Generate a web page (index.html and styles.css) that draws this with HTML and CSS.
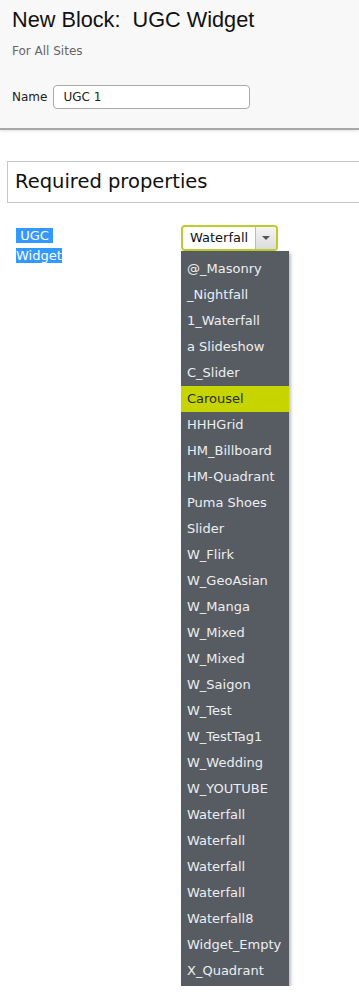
FILE: index.html
```html
<!DOCTYPE html>
<html lang="en">
<head>
    <meta charset="UTF-8">
    <meta name="viewport" content="width=device-width, initial-scale=1.0">
    <title>New Block</title>
    <link rel="stylesheet" href="styles.css">
</head>
<body>
    <div class="header">
        <h1>New Block:&nbsp; UGC Widget</h1>
        <div class="subtitle">For All Sites</div>
        <div class="name-row">
            <label for="block-name">Name</label>
            <input type="text" id="block-name" value="UGC 1">
        </div>
    </div>

    <div class="section">
        <div class="section-title">Required properties</div>
        <div class="prop-row">
            <div class="prop-label"><span class="sel">&nbsp;UGC&nbsp;</span><br><span class="sel">Widget</span></div>
            <div class="combo">
                <div class="combo-box">
                    <span class="combo-text">Waterfall</span>
                    <span class="combo-arrow"></span>
                </div>
                <ul class="combo-list">
                    <li>@_Masonry</li>
                    <li>_Nightfall</li>
                    <li>1_Waterfall</li>
                    <li>a Slideshow</li>
                    <li>C_Slider</li>
                    <li class="active">Carousel</li>
                    <li>HHHGrid</li>
                    <li>HM_Billboard</li>
                    <li>HM-Quadrant</li>
                    <li>Puma Shoes</li>
                    <li>Slider</li>
                    <li>W_Flirk</li>
                    <li>W_GeoAsian</li>
                    <li>W_Manga</li>
                    <li>W_Mixed</li>
                    <li>W_Mixed</li>
                    <li>W_Saigon</li>
                    <li>W_Test</li>
                    <li>W_TestTag1</li>
                    <li>W_Wedding</li>
                    <li>W_YOUTUBE</li>
                    <li>Waterfall</li>
                    <li>Waterfall</li>
                    <li>Waterfall</li>
                    <li>Waterfall</li>
                    <li>Waterfall8</li>
                    <li>Widget_Empty</li>
                    <li>X_Quadrant</li>
                </ul>
            </div>
        </div>
    </div>
</body>
</html>
```

FILE: styles.css
```css
body {
    margin: 0;
    padding: 0;
    font-family: "DejaVu Sans", Verdana, sans-serif;
    font-size: 13px;
    color: #222;
    background: #fff;
    overflow: hidden;
}
.header {
    background: #f8f8f8;
    padding: 7px 12px 0;
    height: 121px;
    border-bottom: 2px solid #a8a8a8;
    box-shadow: 0 1px 3px rgba(0,0,0,0.12);
}
h1 {
    margin: 0;
    font-family: "Liberation Sans", Arial, sans-serif;
    font-weight: normal;
    font-size: 21.7px;
    line-height: 26px;
    color: #111;
}
.subtitle {
    margin-top: 11px;
    font-size: 12px;
    color: #666;
}
.name-row {
    margin-top: 27px;
    display: flex;
    align-items: center;
    gap: 6px;
}
.name-row label {
    font-size: 12px;
    color: #222;
}
.name-row input {
    width: 178px;
    height: 22px;
    padding: 0 8px 0 9px;
    border: 1px solid #aaa;
    border-radius: 4px;
    font-family: "DejaVu Sans", Verdana, sans-serif;
    font-size: 12px;
    color: #222;
    background: #fff;
}
.section {
    padding: 31px 0 0 7px;
}
.section-title {
    border: 1px solid #c8c8c8;
    border-right: none;
    height: 40px;
    line-height: 40px;
    padding-left: 7px;
    font-size: 19.5px;
    color: #111;
}
.prop-row {
    display: flex;
    padding-top: 22px;
}
.prop-label {
    width: 165px;
    padding-left: 9px;
    font-size: 13px;
    line-height: 20px;
    padding-top: 1px;
}
.sel {
    background: #3399ff;
    color: #fff;
}
.combo {
    width: 108px;
}
.combo-box {
    width: 93px;
    height: 22px;
    border: 2px solid #bccc2c;
    border-radius: 4px;
    display: flex;
    background: #fff;
    overflow: hidden;
}
.combo-text {
    flex: 1;
    padding-left: 7px;
    line-height: 22px;
    font-size: 13px;
    color: #111;
}
.combo-arrow {
    width: 20px;
    border-left: 1px solid #bbb;
    background: linear-gradient(#f4f4f4, #dcdcdc);
    position: relative;
}
.combo-arrow::after {
    content: "";
    position: absolute;
    left: 6px;
    top: 9px;
    border-left: 4px solid transparent;
    border-right: 4px solid transparent;
    border-top: 4px solid #555;
}
.combo-list {
    list-style: none;
    margin: 0;
    padding: 5px 0 2px;
    width: 108px;
    background: #575c63;
    box-shadow: 2px 2px 3px rgba(0,0,0,0.25);
}
.combo-list li {
    height: 26px;
    line-height: 26px;
    padding-left: 6px;
    color: #eceef0;
    font-size: 13px;
    white-space: nowrap;
}
.combo-list li.active {
    background: #c6d400;
    color: #2a2a2a;
}
```
